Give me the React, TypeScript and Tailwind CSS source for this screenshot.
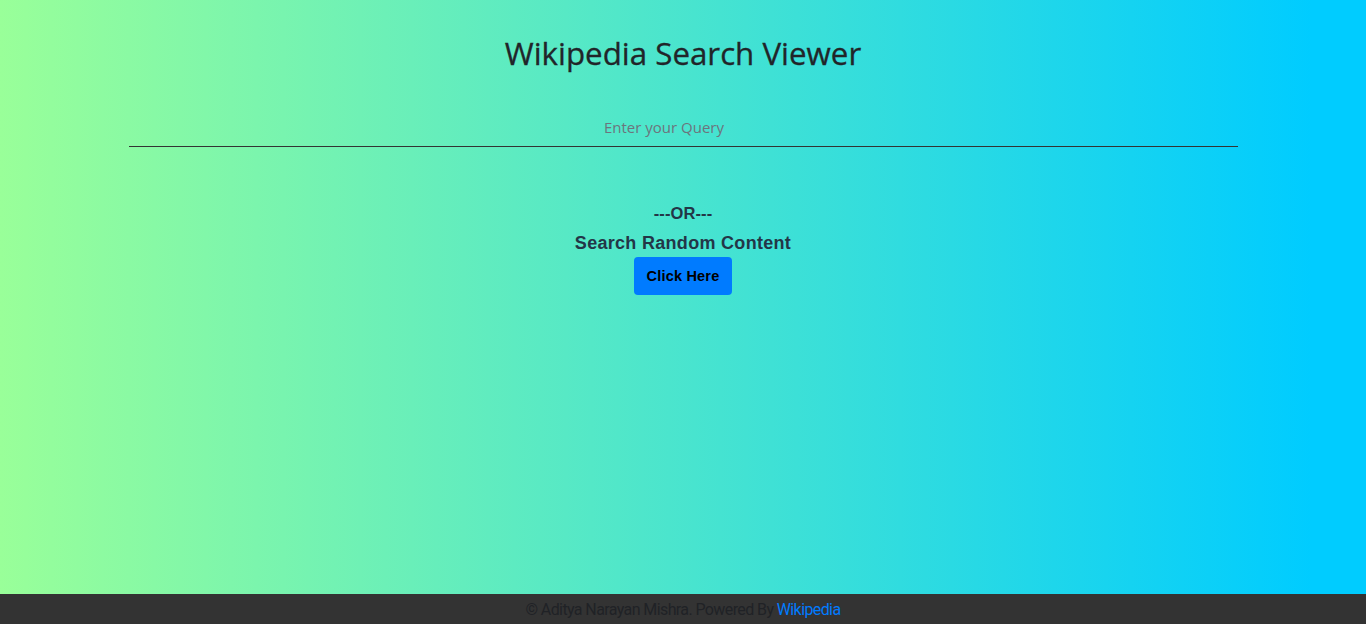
export default function App() {
  return (
    <div className="flex h-[624px] w-full flex-col">
      <main className="flex flex-1 flex-col items-center bg-[linear-gradient(90deg,#99ff99_0%,#00ccff_96%)]">
        <h1 className="mt-[33px] text-[31.3px] leading-[40px] font-medium text-[#212529] [-webkit-text-stroke:0.3px_#212529] [font-family:'Open_Sans',sans-serif]">
          Wikipedia Search Viewer
        </h1>
        <input
          placeholder="Enter your Query"
          className="mt-[42px] w-[1109px] border-b border-[#333] bg-transparent pr-[38px] pb-[7px] text-center text-[15px] leading-[24px] text-[#333] outline-none placeholder:text-[#6c757d] [font-family:'Open_Sans',sans-serif]"
        />
        <div className="mt-[54px] text-[16.5px] leading-[24px] font-bold tracking-[0.1px] text-[#233647] [font-family:'Liberation_Sans',Arial,sans-serif]">
          ---OR---
        </div>
        <div className="mt-[6px] text-[18px] leading-[24px] font-bold tracking-[0.3px] text-[#233647] [font-family:'Liberation_Sans',Arial,sans-serif]">
          Search Random Content
        </div>
        <button className="mt-[2px] h-[38px] w-[98px] rounded-[4px] bg-[#007bff] pt-[1px] text-[14.5px] font-bold tracking-[0.2px] text-black [font-family:'Liberation_Sans',Arial,sans-serif]">
          Click Here
        </button>
      </main>
      <footer className="flex h-[30px] items-center justify-center bg-[#333333] pt-[1px] text-[16px] tracking-[-0.6px] text-[#202226] [font-family:'Roboto',sans-serif]">
        <span>
          © Aditya Narayan Mishra. Powered By <a className="text-[#007bff]">Wikipedia</a>
        </span>
      </footer>
    </div>
  );
}
